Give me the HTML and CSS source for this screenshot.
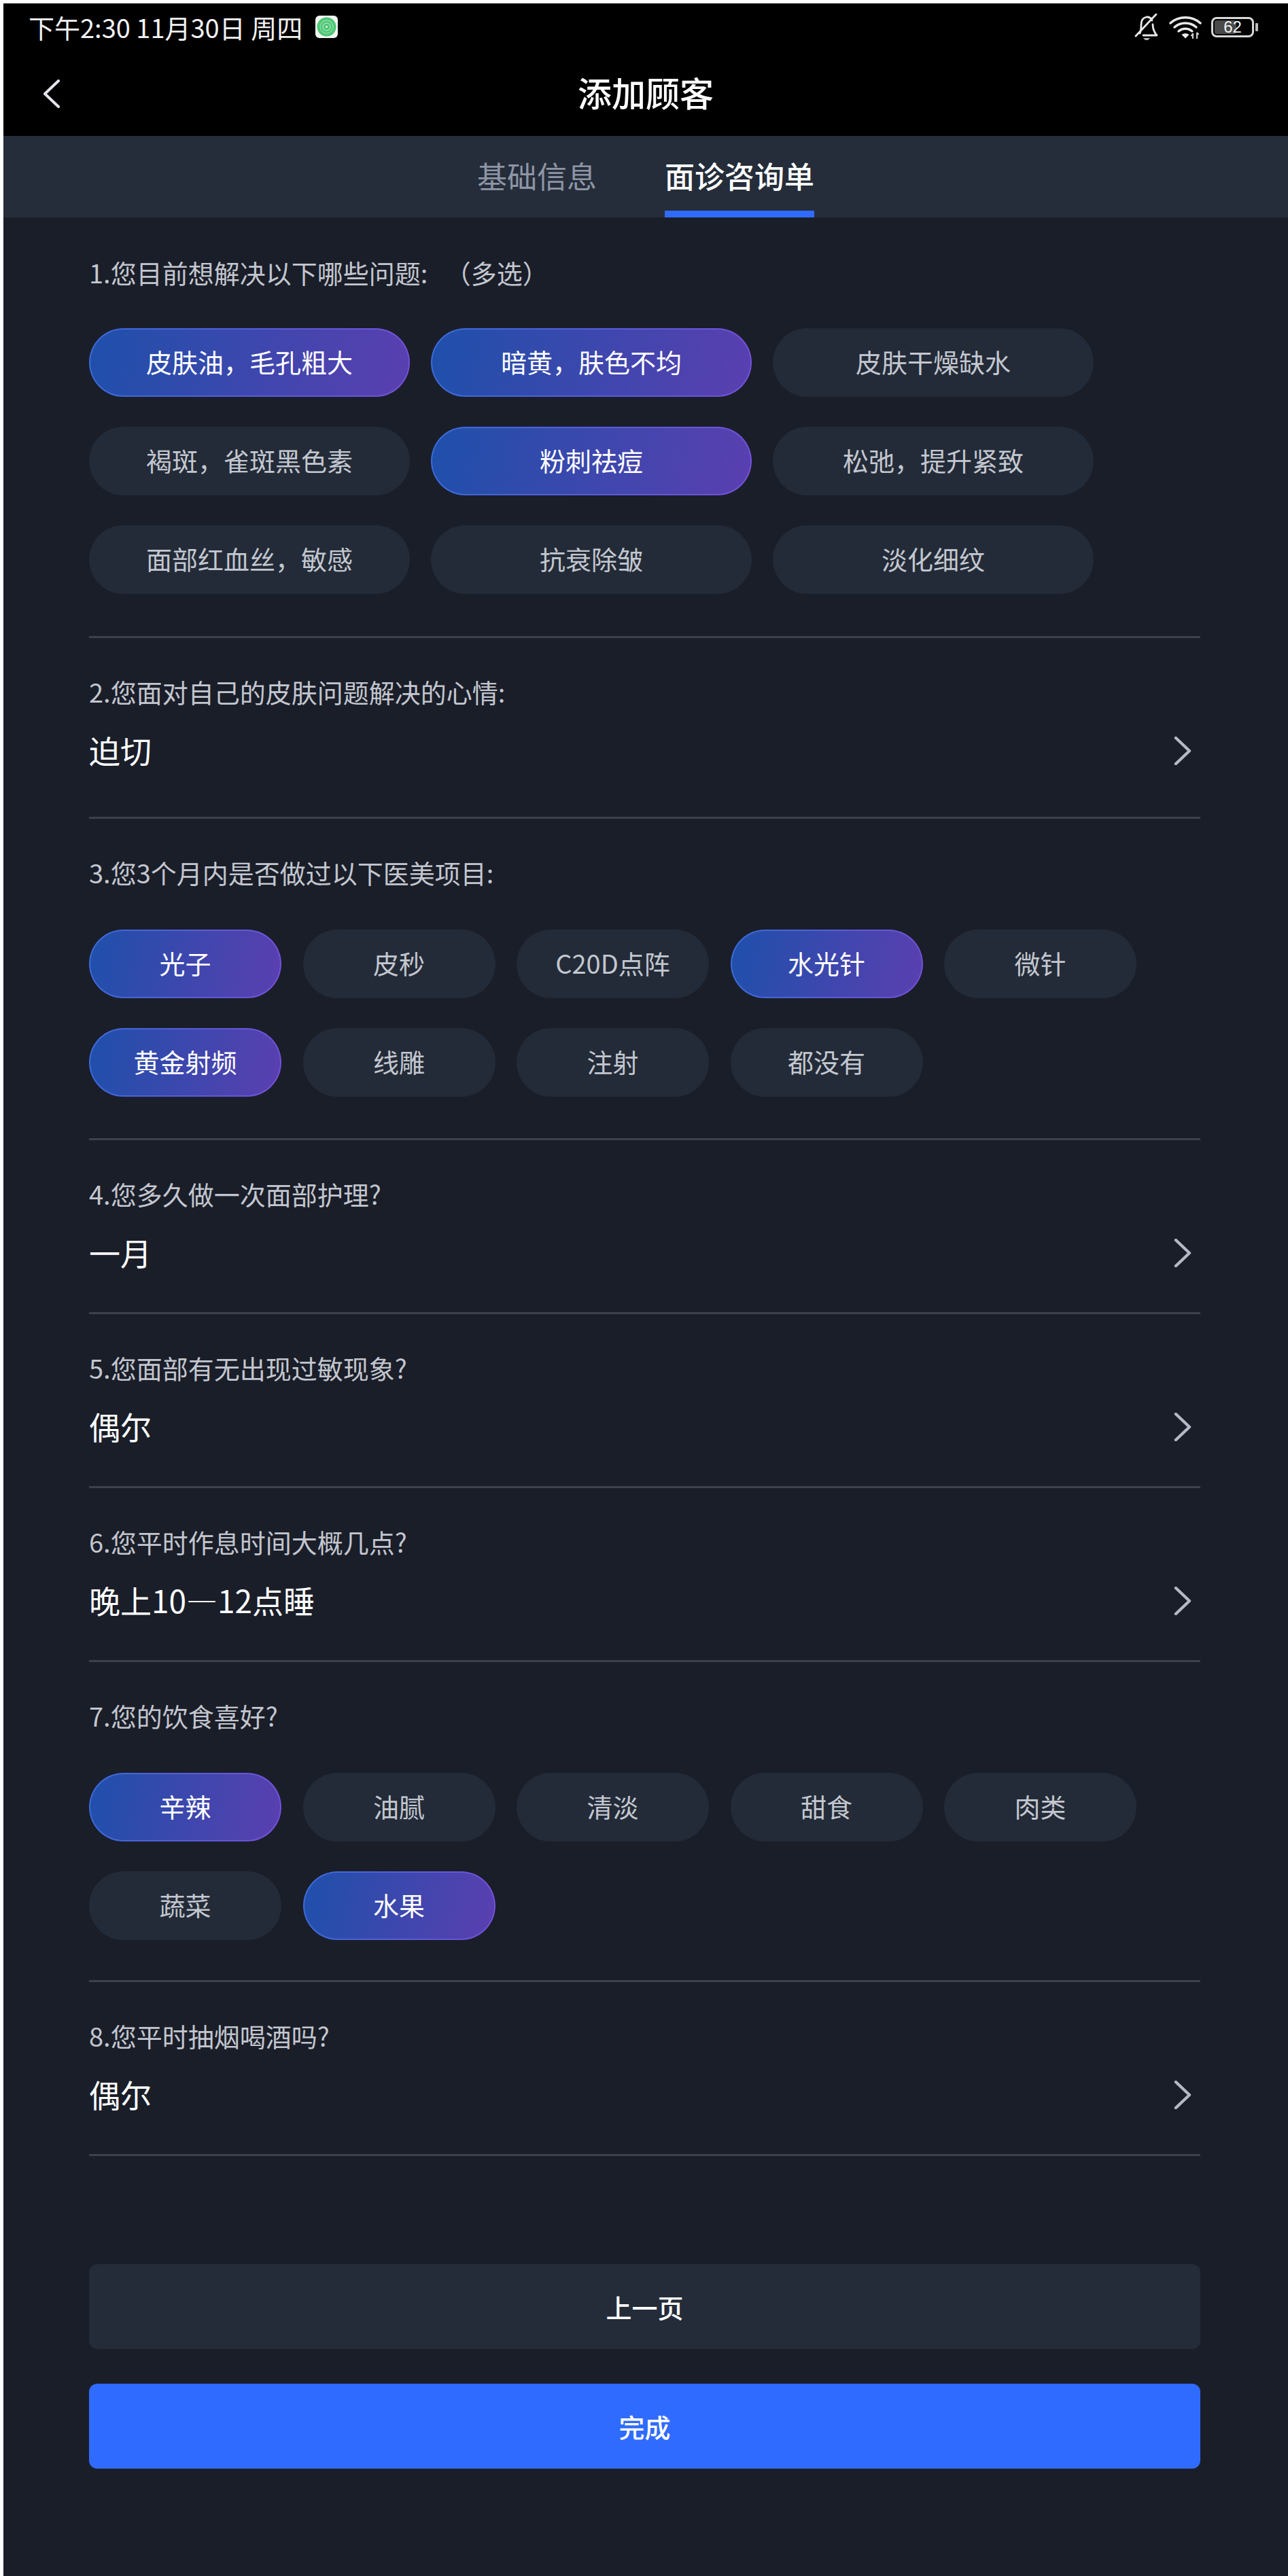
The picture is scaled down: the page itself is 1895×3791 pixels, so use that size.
FILE: index.html
```html
<!DOCTYPE html>
<html lang="zh-CN">
<head>
<meta charset="utf-8">
<title>添加顾客</title>
<link rel="stylesheet" href="styles.css">
</head>
<body>
<div class="screen">
  <header class="topbar">
    <div class="status">
      <div class="status-left">
        <span class="status-time">下午2:30 11月30日 周四</span>
        <svg class="app-badge" viewBox="0 0 33 33" aria-hidden="true">
          <rect width="33" height="33" rx="6" fill="#f1f7f2"/>
          <circle cx="16.5" cy="16.5" r="14" fill="#4cc774"/>
          <circle cx="16.5" cy="16.5" r="9.5" fill="none" stroke="#8ddba6" stroke-width="1.4"/>
          <circle cx="16.5" cy="16.5" r="5.5" fill="none" stroke="#a5e3ba" stroke-width="1.4"/>
          <circle cx="16.5" cy="16.5" r="1.8" fill="#c5edd2"/>
        </svg>
      </div>
      <div class="status-right">
        <svg class="ic-bell" viewBox="0 0 36 40" aria-hidden="true">
          <path d="M8 29 C10 25 10 21 10 16 C10 10 13 6 18 5 C22 5 25 7 26 10 M27 16 C27 22 28 26 33 32 H13" fill="none" stroke="#e8e8e8" stroke-width="2.8" stroke-linecap="round" stroke-linejoin="round"/>
          <path d="M2 33 L32 1" stroke="#e8e8e8" stroke-width="2.8" stroke-linecap="round"/>
          <path d="M13 36 H23 L20 39 H16 Z" fill="#b9b9b9"/>
        </svg>
        <svg class="ic-wifi" viewBox="0 0 48 36" aria-hidden="true">
          <path d="M2 12 C14 1 34 1 46 12" fill="none" stroke="#e8e8e8" stroke-width="3.4" stroke-linecap="round"/>
          <path d="M8 18 C17 10 31 10 40 18" fill="none" stroke="#e8e8e8" stroke-width="3.4" stroke-linecap="round"/>
          <path d="M14 24 C20 19 28 19 34 24" fill="none" stroke="#e8e8e8" stroke-width="3.4" stroke-linecap="round"/>
          <path d="M18.5 29 C21.5 26.6 26.5 26.6 29.5 29 L24 34.5 Z" fill="#f0f0f0"/>
          <path d="M35 27 V35 M32.5 31 L35 28 M41 26 V35 M41 26 L43.5 29" fill="none" stroke="#cfcfcf" stroke-width="2.2"/>
        </svg>
        <div class="battery">
          <div class="battery-body">
            <span class="battery-fill"></span>
            <span class="battery-num">62</span>
          </div>
          <span class="battery-nub"></span>
        </div>
      </div>
    </div>
    <div class="navbar">
      <svg class="ic-back" viewBox="0 0 26 42" aria-hidden="true">
        <path d="M23 2 L3 21 L23 40" fill="none" stroke="#e4e4ee" stroke-width="4" stroke-linecap="round" stroke-linejoin="round"/>
      </svg>
      <h1 class="title">添加顾客</h1>
    </div>
  </header>

  <nav class="tabs">
    <span class="tab">基础信息</span>
    <span class="tab tab-active">面诊咨询单</span>
  </nav>

  <main class="form">
    <section class="q q-pills q-first">
      <p class="q-label">1.您目前想解决以下哪些问题:&nbsp;&nbsp;&nbsp;&#xFF08;多选&#xFF09;</p>
      <div class="pills pills-wide">
        <span class="pill pill-wide on">皮肤油&#xFF0C;毛孔粗大</span>
        <span class="pill pill-wide on">暗黄&#xFF0C;肤色不均</span>
        <span class="pill pill-wide">皮肤干燥缺水</span>
        <span class="pill pill-wide">褐斑&#xFF0C;雀斑黑色素</span>
        <span class="pill pill-wide on">粉刺祛痘</span>
        <span class="pill pill-wide">松弛&#xFF0C;提升紧致</span>
        <span class="pill pill-wide">面部红血丝&#xFF0C;敏感</span>
        <span class="pill pill-wide">抗衰除皱</span>
        <span class="pill pill-wide">淡化细纹</span>
      </div>
    </section>

    <section class="q q-select q-tall">
      <p class="q-label">2.您面对自己的皮肤问题解决的心情:</p>
      <div class="q-value-row">
        <span class="q-value">迫切</span>
        <svg class="ic-more" viewBox="0 0 26 42" aria-hidden="true"><path d="M3 2 L23 21 L3 40" fill="none" stroke="#b4b9c5" stroke-width="4.4" stroke-linecap="round" stroke-linejoin="round"/></svg>
      </div>
    </section>

    <section class="q q-pills">
      <p class="q-label">3.您3个月内是否做过以下医美项目:</p>
      <div class="pills">
        <span class="pill on">光子</span>
        <span class="pill">皮秒</span>
        <span class="pill">C20D点阵</span>
        <span class="pill on">水光针</span>
        <span class="pill">微针</span>
        <span class="pill on">黄金射频</span>
        <span class="pill">线雕</span>
        <span class="pill">注射</span>
        <span class="pill">都没有</span>
      </div>
    </section>

    <section class="q q-select">
      <p class="q-label">4.您多久做一次面部护理?</p>
      <div class="q-value-row">
        <span class="q-value">一月</span>
        <svg class="ic-more" viewBox="0 0 26 42" aria-hidden="true"><path d="M3 2 L23 21 L3 40" fill="none" stroke="#b4b9c5" stroke-width="4.4" stroke-linecap="round" stroke-linejoin="round"/></svg>
      </div>
    </section>

    <section class="q q-select">
      <p class="q-label">5.您面部有无出现过敏现象?</p>
      <div class="q-value-row">
        <span class="q-value">偶尔</span>
        <svg class="ic-more" viewBox="0 0 26 42" aria-hidden="true"><path d="M3 2 L23 21 L3 40" fill="none" stroke="#b4b9c5" stroke-width="4.4" stroke-linecap="round" stroke-linejoin="round"/></svg>
      </div>
    </section>

    <section class="q q-select">
      <p class="q-label">6.您平时作息时间大概几点?</p>
      <div class="q-value-row">
        <span class="q-value">晚上10—12点睡</span>
        <svg class="ic-more" viewBox="0 0 26 42" aria-hidden="true"><path d="M3 2 L23 21 L3 40" fill="none" stroke="#b4b9c5" stroke-width="4.4" stroke-linecap="round" stroke-linejoin="round"/></svg>
      </div>
    </section>

    <section class="q q-pills q-pills-compact">
      <p class="q-label">7.您的饮食喜好?</p>
      <div class="pills">
        <span class="pill on">辛辣</span>
        <span class="pill">油腻</span>
        <span class="pill">清淡</span>
        <span class="pill">甜食</span>
        <span class="pill">肉类</span>
        <span class="pill">蔬菜</span>
        <span class="pill on">水果</span>
      </div>
    </section>

    <section class="q q-select">
      <p class="q-label">8.您平时抽烟喝酒吗?</p>
      <div class="q-value-row">
        <span class="q-value">偶尔</span>
        <svg class="ic-more" viewBox="0 0 26 42" aria-hidden="true"><path d="M3 2 L23 21 L3 40" fill="none" stroke="#b4b9c5" stroke-width="4.4" stroke-linecap="round" stroke-linejoin="round"/></svg>
      </div>
    </section>

    <div class="actions">
      <button class="btn btn-prev" type="button">上一页</button>
      <button class="btn btn-done" type="button">完成</button>
    </div>
  </main>
</div>
</body>
</html>
```
FILE: styles.css
```css
* { box-sizing: border-box; }
html, body { margin: 0; padding: 0; background: #fff; }
body {
  padding: 5px 0 0 5px;
  font-family: "Noto Sans CJK SC", "Noto Sans", sans-serif;
}
.screen {
  height: 3786px;
  background: #1a1e29;
  display: flex;
  flex-direction: column;
  overflow: hidden;
}
.topbar { background: #000; height: 195px; flex: none; }
.status {
  height: 69px;
  padding: 0 44px 0 37px;
  display: flex;
  align-items: center;
  justify-content: space-between;
}
.status-left { display: flex; align-items: center; gap: 19px; }
.status-time { color: #f2f2f2; font-size: 38px; line-height: 50px; white-space: nowrap; }
.app-badge { width: 33px; height: 33px; display: block; }
.status-right { display: flex; align-items: center; }
.ic-bell { width: 36px; height: 40px; display: block; }
.ic-wifi { width: 48px; height: 36px; display: block; margin-left: 15px; }
.battery { display: flex; align-items: center; margin-left: 14px; }
.battery-body {
  position: relative;
  width: 63px;
  height: 30px;
  border: 3px solid #d8d8d8;
  border-radius: 8px;
  display: flex;
  align-items: center;
  justify-content: center;
}
.battery-fill {
  position: absolute;
  left: 2px; top: 2px; bottom: 2px;
  width: 32px;
  background: #4a4a4a;
  border-radius: 3px;
}
.battery-num {
  position: relative;
  color: #f0f0f0;
  font-size: 24px;
  line-height: 24px;
  font-family: "Liberation Sans", sans-serif;
}
.battery-nub { width: 4px; height: 12px; margin-left: 2px; background: #bcbcbc; border-radius: 1px; }
.navbar {
  position: relative;
  height: 126px;
  display: flex;
  align-items: center;
  justify-content: center;
}
.ic-back {
  position: absolute;
  left: 58px;
  top: 43px;
  width: 26px;
  height: 42px;
}
.title {
  margin: 0;
  color: #fff;
  font-size: 50px;
  font-weight: 500;
  line-height: 70px;
  position: relative;
  top: -2px;
}
.tabs {
  flex: none;
  height: 120px;
  background: #252d3a;
  display: flex;
  justify-content: center;
  gap: 100px;
}
.tab {
  height: 120px;
  padding-top: 27px;
  color: #8e95a5;
  font-size: 44px;
  line-height: 62px;
}
.tab-active {
  color: #fff;
  font-weight: 500;
  border-bottom: 10px solid #306bff;
}
.form { flex: 1; padding: 0 129px 0 126px; }
.q { border-bottom: 3px solid #3d414c; padding-top: 54px; }
.q-first { padding-top: 56px; }
.q-label {
  margin: 0;
  color: #c3c6ce;
  font-size: 38px;
  line-height: 50px;
  white-space: nowrap;
}
.q-pills { padding-bottom: 61px; }
.q-first { padding-bottom: 62px; }
.q-pills-compact { padding-bottom: 59px; }
.q-pills .q-label { margin-bottom: 59px; }
.q-first .q-label { margin-bottom: 57px; }
.pills { display: flex; flex-wrap: wrap; gap: 44px 31.5px; }
.pills-wide { column-gap: 31px; }
.pill {
  width: 283px;
  height: 101px;
  border-radius: 51px;
  background: #232b38;
  color: #c3c7cf;
  font-size: 38px;
  line-height: 97px;
  text-align: center;
  white-space: nowrap;
}
.pill-wide { width: 472px; }
.pill.on {
  color: #fff;
  line-height: 93px;
  border: 2px solid transparent;
  background:
    linear-gradient(100deg, #1f50ab 0%, #5a3fb0 100%) padding-box,
    linear-gradient(100deg, #3a6bd8 0%, #7450d8 100%) border-box;
}
.q-select { padding-bottom: 57px; }
.q-tall { padding-bottom: 67px; }
.q-value-row {
  margin-top: 32px;
  padding-right: 13px;
  display: flex;
  align-items: center;
  justify-content: space-between;
  height: 60px;
}
.q-value { color: #fff; font-size: 46px; line-height: 56px; padding-bottom: 4px; }
.ic-more { width: 26px; height: 42px; display: block; }
.actions {
  margin-top: 159px;
  display: flex;
  flex-direction: column;
  gap: 51px;
}
.btn {
  height: 125px;
  border: 0;
  border-radius: 12px;
  color: #fff;
  font-family: inherit;
  font-size: 38px;
  font-weight: 500;
}
.btn-prev { background: #242c39; }
.btn-done { background: #306bff; }
```
